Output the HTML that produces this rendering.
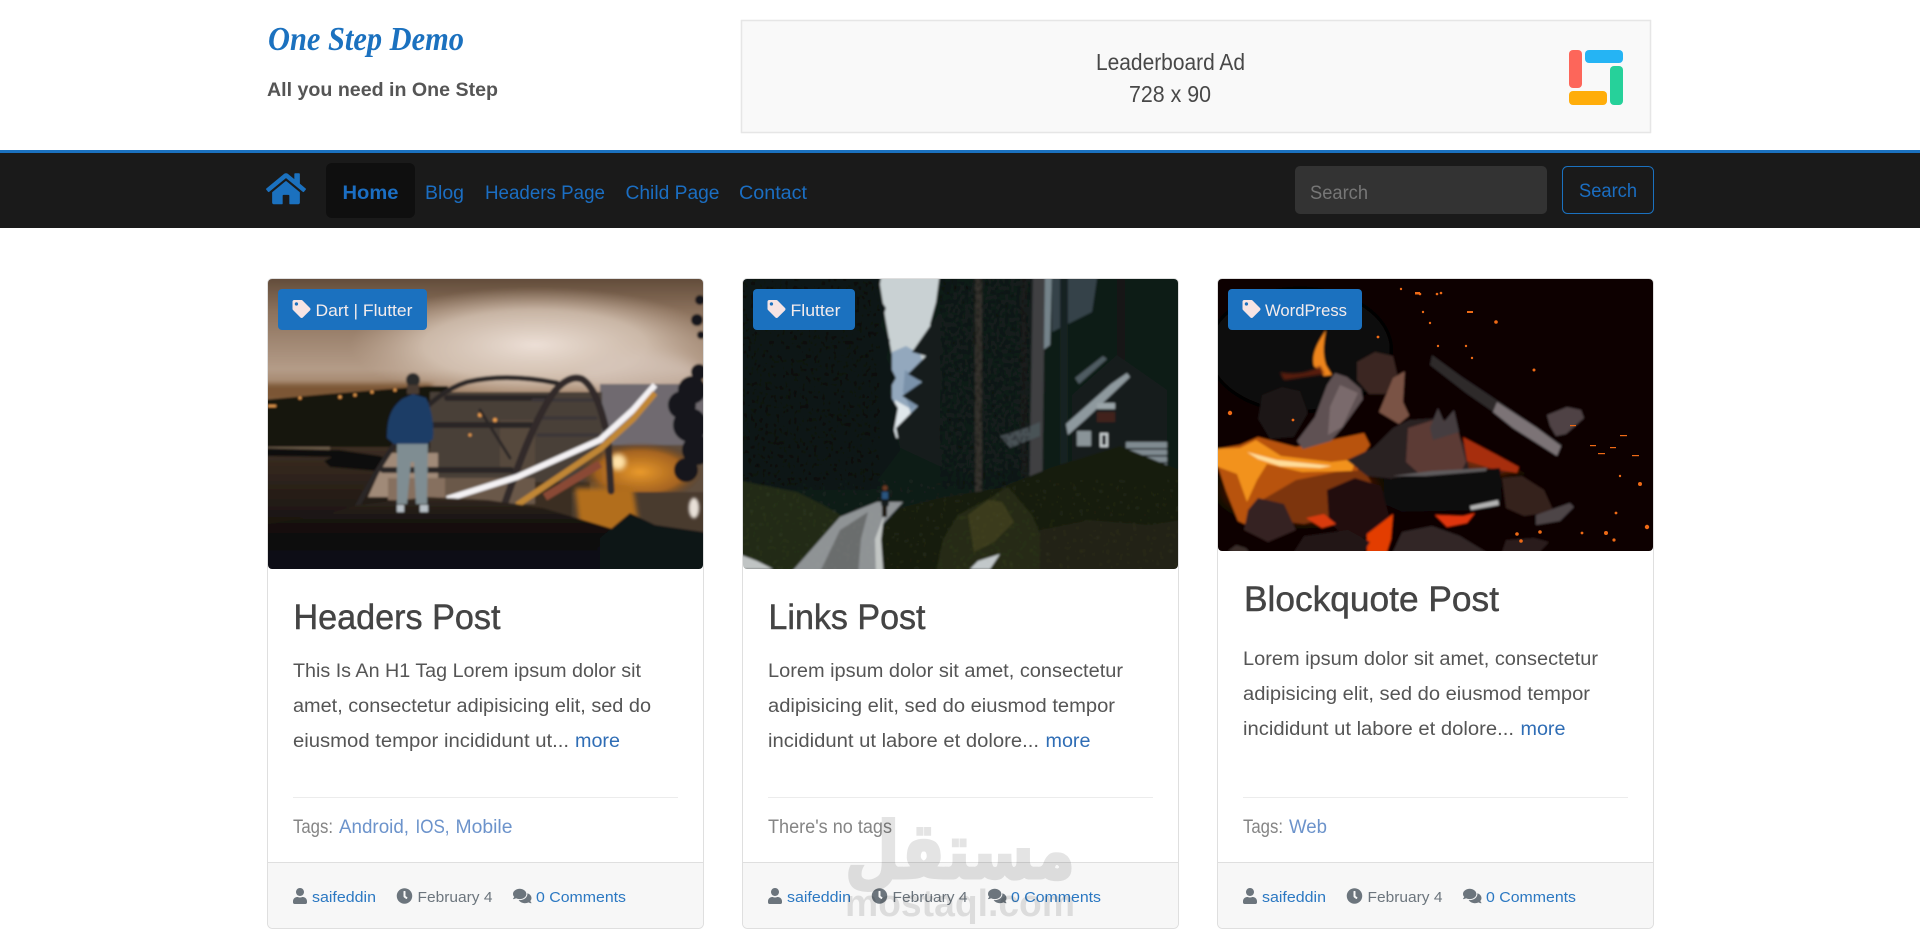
<!DOCTYPE html>
<html lang="en">
<head>
<meta charset="utf-8">
<title>One Step Demo</title>
<style>
html,body{margin:0;padding:0;background:#fff;width:1920px;height:943px;overflow:hidden}
svg{display:block}
text{font-family:"Liberation Sans",sans-serif}
.nav{font-size:19px;fill:#1b6ec2}
.p{font-size:19px;fill:#555}
.h{font-size:35px;fill:#444;stroke:#444;stroke-width:.45}
.t{font-size:19px;fill:#858585}
.tl{font-size:19px;fill:#6c93cb}
.m{font-size:19px;fill:#2f6db5}
.f{font-size:15px;fill:#6c757d}
.fl{font-size:15px;fill:#2b78c2}
.b{font-size:17px;fill:#f4ecec}
</style>
</head>
<body>
<svg width="1920" height="943" viewBox="0 0 1920 943" xmlns="http://www.w3.org/2000/svg">
<defs>
<symbol id="tag" viewBox="0 0 512 512"><path d="M0 252.118V48C0 21.49 21.49 0 48 0h204.118a48 48 0 0 1 33.941 14.059l211.882 211.882c18.745 18.745 18.745 49.137 0 67.882L293.823 497.941c-18.745 18.745-49.137 18.745-67.882 0L14.059 286.059A48 48 0 0 1 0 252.118zM112 64c-26.51 0-48 21.49-48 48s21.49 48 48 48 48-21.49 48-48-21.49-48-48-48z"/></symbol>
<symbol id="user" viewBox="0 0 448 512"><path d="M224 256c70.7 0 128-57.3 128-128S294.7 0 224 0 96 57.3 96 128s57.3 128 128 128zm89.6 32h-16.7c-22.2 10.2-46.9 16-72.9 16s-50.6-5.8-72.9-16h-16.7C60.2 288 0 348.2 0 422.4V464c0 26.5 21.5 48 48 48h352c26.5 0 48-21.5 48-48v-41.6c0-74.2-60.2-134.4-134.4-134.4z"/></symbol>
<symbol id="clock" viewBox="0 0 512 512"><path d="M256,8C119,8,8,119,8,256S119,504,256,504,504,393,504,256,393,8,256,8Zm92.49,313h0l-20,25a16,16,0,0,1-22.49,2.5h0l-67-49.72a40,40,0,0,1-15-31.23V112a16,16,0,0,1,16-16h32a16,16,0,0,1,16,16V256l58,42.5A16,16,0,0,1,348.49,321Z"/></symbol>
<symbol id="comments" viewBox="0 0 576 512"><path d="M416 192c0-88.4-93.1-160-208-160S0 103.6 0 192c0 34.3 14.1 65.9 38 92-13.4 30.2-35.5 54.2-35.8 54.5-2.2 2.3-2.8 5.7-1.5 8.7S4.8 352 8 352c36.6 0 66.9-12.3 88.7-25 32.2 15.7 70.3 25 111.3 25 114.9 0 208-71.6 208-160zm122 220c23.9-26 38-57.7 38-92 0-66.9-53.5-124.2-129.3-148.1.9 6.6 1.3 13.3 1.3 20.1 0 105.9-107.7 192-240 192-10.8 0-21.3-.8-31.7-1.9C207.8 439.6 281.8 480 368 480c41 0 79.1-9.2 111.3-25 21.8 12.7 52.1 25 88.7 25 3.2 0 6.1-1.9 7.3-4.8 1.3-2.9.7-6.3-1.5-8.7-.3-.3-22.4-24.2-35.8-54.5z"/></symbol>
<symbol id="home" viewBox="0 0 576 512"><path d="M488 312.7V456c0 13.3-10.7 24-24 24H348c-6.6 0-12-5.4-12-12V356c0-6.6-5.4-12-12-12h-72c-6.6 0-12 5.4-12 12v112c0 6.6-5.4 12-12 12H112c-13.3 0-24-10.7-24-24V312.7c0-3.6 1.6-7 4.4-9.3l188-154.8c4.4-3.6 10.8-3.6 15.3 0l188 154.8c2.7 2.3 4.3 5.7 4.3 9.3zm83.6-60.9L488 182.9V44.4c0-6.6-5.4-12-12-12h-56c-6.6 0-12 5.4-12 12V117l-89.5-73.7c-17.7-14.6-43.3-14.6-61 0L4.4 251.8c-5.1 4.2-5.8 11.8-1.6 16.9l25.5 31c4.2 5.1 11.8 5.8 16.9 1.6l235.2-193.7c4.4-3.6 10.8-3.6 15.3 0l235.2 193.7c5.1 4.2 12.7 3.5 16.9-1.6l25.5-31c4.2-5.2 3.4-12.7-1.7-16.9z"/></symbol>
<clipPath id="c1"><rect x="268" y="279" width="435" height="290" rx="4"/></clipPath>
<clipPath id="c2"><rect x="743" y="279" width="435" height="290" rx="4"/></clipPath>
<clipPath id="c3"><rect x="1218" y="279" width="435" height="272" rx="4"/></clipPath>
<filter id="soft" x="-5%" y="-5%" width="110%" height="110%"><feGaussianBlur stdDeviation="1.1"/></filter>
<filter id="bl1" x="-20%" y="-20%" width="140%" height="140%"><feGaussianBlur stdDeviation="1"/></filter>
<filter id="bl2" x="-20%" y="-20%" width="140%" height="140%"><feGaussianBlur stdDeviation="2.5"/></filter>
<filter id="bl5" x="-30%" y="-30%" width="160%" height="160%"><feGaussianBlur stdDeviation="6"/></filter>
<filter id="grain" x="0" y="0" width="100%" height="100%"><feTurbulence type="fractalNoise" baseFrequency=".35 .22" numOctaves="2" seed="4"/><feColorMatrix values="0 0 0 0 0  0 0 0 0 0  0 0 0 0 0  0 0 0 3.2 -1.5"/></filter>
<filter id="grainL" x="0" y="0" width="100%" height="100%"><feTurbulence type="fractalNoise" baseFrequency=".3" numOctaves="2" seed="9"/><feColorMatrix values="0 0 0 0 .42  0 0 0 0 .46  0 0 0 0 .38  0 0 0 3 -1.75"/></filter>
<linearGradient id="sky1" x1="0" y1="0" x2="0" y2="1"><stop offset="0" stop-color="#5a4534"/><stop offset=".3" stop-color="#8b715c"/><stop offset=".75" stop-color="#b49c88"/><stop offset="1" stop-color="#8f6a4a"/></linearGradient>
<radialGradient id="glow1"><stop offset="0" stop-color="#ecdfd6"/><stop offset=".6" stop-color="#dbcabb" stop-opacity=".75"/><stop offset="1" stop-color="#cbb5a2" stop-opacity="0"/></radialGradient>
<linearGradient id="wat1" x1="0" y1="0" x2="0" y2="1"><stop offset="0" stop-color="#3c2e23"/><stop offset="1" stop-color="#16110e"/></linearGradient>
<linearGradient id="fg1" x1="0" y1="0" x2="0" y2="1"><stop offset="0" stop-color="#33281f"/><stop offset=".35" stop-color="#14110f"/><stop offset="1" stop-color="#071014"/></linearGradient>
<radialGradient id="fireglow"><stop offset="0" stop-color="#e99a2c"/><stop offset=".7" stop-color="#b86a18" stop-opacity=".8"/><stop offset="1" stop-color="#6a3a10" stop-opacity="0"/></radialGradient>
<radialGradient id="fl3"><stop offset="0" stop-color="#c95a0c"/><stop offset=".7" stop-color="#7e2c08" stop-opacity=".85"/><stop offset="1" stop-color="#3a1004" stop-opacity="0"/></radialGradient>
</defs>

<rect width="1920" height="943" fill="#fff"/>

<!-- Header -->
<text x="268" y="50" font-size="34" font-style="italic" font-weight="700" fill="#1b71bf" textLength="196" lengthAdjust="spacingAndGlyphs" style="font-family:'Liberation Serif',serif">One Step Demo</text>
<text x="267" y="96" font-size="19" font-weight="700" fill="#555" textLength="231" lengthAdjust="spacingAndGlyphs">All you need in One Step</text>

<rect x="741.5" y="20.5" width="909" height="112" fill="#f9f9f9" stroke="#e6e6e6" stroke-width="1.5"/>
<text x="1096" y="70" font-size="23" fill="#484848" textLength="149" lengthAdjust="spacingAndGlyphs">Leaderboard Ad</text>
<text x="1129" y="102" font-size="23" fill="#484848" textLength="82" lengthAdjust="spacingAndGlyphs">728 x 90</text>
<rect x="1569" y="50" width="13" height="38" rx="4" fill="#fd665a"/>
<rect x="1585" y="50" width="38" height="13" rx="4" fill="#25b4f4"/>
<rect x="1610" y="66" width="13" height="39" rx="4" fill="#26d19a"/>
<rect x="1569" y="91" width="38" height="14" rx="4" fill="#ffad0a"/>

<!-- Nav -->
<rect x="0" y="150" width="1920" height="3" fill="#1b71bf"/>
<rect x="0" y="153" width="1920" height="75" fill="#1a1a1a"/>
<use href="#home" x="266" y="171" width="40" height="35.5" fill="#1b71bf"/>
<rect x="326" y="163" width="89" height="55" rx="6" fill="#0f0f0f"/>
<text x="342.5" y="199" class="nav" font-weight="700" textLength="56" lengthAdjust="spacingAndGlyphs">Home</text>
<text x="425" y="199" class="nav" textLength="39" lengthAdjust="spacingAndGlyphs">Blog</text>
<text x="485" y="199" class="nav" textLength="120" lengthAdjust="spacingAndGlyphs">Headers Page</text>
<text x="625.5" y="199" class="nav" textLength="94" lengthAdjust="spacingAndGlyphs">Child Page</text>
<text x="739" y="199" class="nav" textLength="68" lengthAdjust="spacingAndGlyphs">Contact</text>
<rect x="1295" y="166" width="252" height="48" rx="5" fill="#333"/>
<text x="1310" y="199" font-size="19" fill="#777" textLength="58" lengthAdjust="spacingAndGlyphs">Search</text>
<rect x="1562.5" y="166.5" width="91" height="47" rx="5" fill="none" stroke="#1b71bf"/>
<text x="1579" y="197" class="nav" textLength="58" lengthAdjust="spacingAndGlyphs">Search</text>

<!-- Card 1 -->
<rect x="267.5" y="278.5" width="436" height="650" rx="5" fill="#fff" stroke="#dfdfdf"/>
<path d="M268 863h435v60a5 5 0 0 1-5 5H273a5 5 0 0 1-5-5z" fill="#f7f7f7"/>
<rect x="268" y="862" width="435" height="1" fill="#dfdfdf"/>
<g clip-path="url(#c1)">
 <g filter="url(#soft)">
  <rect x="260" y="395" width="450" height="182" fill="#3a2e24"/>
  <rect x="260" y="272" width="450" height="130" fill="url(#sky1)"/>
  <ellipse cx="535" cy="345" rx="185" ry="58" fill="url(#glow1)"/>
  <ellipse cx="640" cy="375" rx="60" ry="22" fill="#d8c8be" opacity=".6" filter="url(#bl5)"/>
  <rect x="262" y="384" width="170" height="16" fill="#7b5635" filter="url(#bl2)"/>
  <!-- distant hills right -->
  <rect x="600" y="384" width="110" height="66" fill="#6f6a70"/>
  <rect x="590" y="445" width="120" height="60" fill="#5e4d3c"/>
  <!-- land left -->
  <path d="M262 400l66-6 100-8 20 0v62H262z" fill="#17130d"/>
  <rect x="262" y="447" width="130" height="85" fill="url(#wat1)"/>
  <rect x="262" y="447" width="68" height="8" fill="#6f5e4b"/>
  <path d="M262 456l70 1-8 4 6 6 60 5 10-8-20-8-40-6-78-2z" fill="#110f0b"/>
  <!-- under bridge -->
  <rect x="430" y="392" width="172" height="90" fill="#4a4037"/>
  <path d="M368 497l20-44h50v44z" fill="#a08a78"/>
  <path d="M388 478h60v22h-60z" fill="#86705f"/>
  <path d="M445 478h90v26h-90z" fill="#6a5949"/>
  <path d="M500 420h35v50h-35z" fill="#57493c"/>
  <ellipse cx="640" cy="472" rx="62" ry="30" fill="url(#fireglow)"/>
  <rect x="572" y="492" width="138" height="48" fill="#4a3b2f"/>
  <path d="M575 488h58l8 52h-60z" fill="#b26e1e" filter="url(#bl2)"/>
  <circle cx="618" cy="462" r="8" fill="#ffe2a8" filter="url(#bl2)"/>
  <ellipse cx="694" cy="508" rx="5" ry="10" fill="#e8e0d8" filter="url(#bl1)"/>
  <g fill="#f0a050"><circle cx="300" cy="398" r="1.5"/><circle cx="340" cy="397" r="1.6"/><circle cx="355" cy="395" r="1.5"/><circle cx="372" cy="392" r="1.5"/><circle cx="395" cy="390" r="1.5"/><rect x="268" y="405" width="8" height="2"/><circle cx="480" cy="415" r="2"/><circle cx="495" cy="420" r="2"/><circle cx="470" cy="435" r="1.5"/></g>
  <!-- bridge -->
  <g fill="none" stroke="#2a2527" stroke-linecap="round">
    <path d="M357 507C390 445 425 395 467 382c30-7 60-5 90 1" stroke-width="5"/>
    <path d="M447 398h100M433 425h98M383 470h128" stroke-width="6"/>
    <path d="M533 400h62M536 418h60M538 435h60" stroke-width="3" stroke="#3a3638"/>
    <path d="M505 503C520 460 535 420 552 395c8-12 20-20 30-16 14 8 22 40 26 60l3 52" stroke-width="7" stroke="#302a2c"/>
    <path d="M480 410l30 48" stroke-width="3"/>
  </g>
  <path d="M447 499l70-22 83-37 33-30 22-25" fill="none" stroke="#f4f2f4" stroke-width="6"/>
  <path d="M517 505l83-56 33-30 22-26" fill="none" stroke="#c08636" stroke-width="6"/>
  <path d="M545 497l55-33" fill="none" stroke="#8a4a34" stroke-width="8"/>
  <!-- foreground -->
  <path d="M262 525l66-11 30-9 70-8 60 3 55 8 60 18 40 12 60-4v40H262z" fill="url(#fg1)"/>
  <path d="M600 538l30-25 25 12 55 8v40H600z" fill="#0c1314"/>
  <!-- man -->
  <path d="M397 441h31l-1 63h-11l-2-42h-3l-4 42h-10z" fill="#7f8d92"/>
  <path d="M387 438c0-20 4-30 15-39l11-5 13 4c6 12 8 26 7 41l-6 5h-33z" fill="#1b3c66"/>
  <circle cx="413" cy="380" r="7" fill="#2a2a2a"/><rect x="407" y="385" width="12" height="9" fill="#4a3a30"/>
  <rect x="397" y="505" width="7" height="7" fill="#b8c0c6"/><rect x="420" y="505" width="8" height="7" fill="#b8c0c6"/>
  <!-- trees -->
  <g fill="#12171a">
    <circle cx="692" cy="390" r="14"/><circle cx="699" cy="372" r="8"/><circle cx="682" cy="405" r="14"/><circle cx="690" cy="425" r="17"/><circle cx="697" cy="450" r="15"/><circle cx="686" cy="470" r="12"/><circle cx="700" cy="300" r="5"/><circle cx="697" cy="320" r="6"/><circle cx="701" cy="335" r="4"/>
  </g>
 </g>
</g>
<rect x="278" y="289" width="149" height="41" rx="4" fill="#1b71bf"/>
<use href="#tag" x="292" y="300" width="19" height="18" fill="#f6e4e4"/>
<text x="315.5" y="316" class="b" textLength="97" lengthAdjust="spacingAndGlyphs">Dart | Flutter</text>
<text x="293.5" y="629" class="h" textLength="207" lengthAdjust="spacingAndGlyphs">Headers Post</text>
<text x="293" y="677" class="p" textLength="348" lengthAdjust="spacingAndGlyphs">This Is An H1 Tag Lorem ipsum dolor sit</text>
<text x="293" y="712" class="p" textLength="358" lengthAdjust="spacingAndGlyphs">amet, consectetur adipisicing elit, sed do</text>
<text x="293" y="747" class="p" textLength="276" lengthAdjust="spacingAndGlyphs">eiusmod tempor incididunt ut...</text>
<text x="575" y="747" class="m" textLength="45" lengthAdjust="spacingAndGlyphs">more</text>
<rect x="293" y="797" width="385" height="1" fill="#ececec"/>
<text x="293" y="833" class="t" textLength="40" lengthAdjust="spacingAndGlyphs">Tags:</text>
<text x="339" y="833" class="tl" textLength="70" lengthAdjust="spacingAndGlyphs">Android,</text>
<text x="415.5" y="833" class="tl" textLength="34" lengthAdjust="spacingAndGlyphs">IOS,</text>
<text x="455.5" y="833" class="tl" textLength="57" lengthAdjust="spacingAndGlyphs">Mobile</text>
<use href="#user" x="292.5" y="888" width="15" height="16" fill="#6c757d"/>
<text x="312" y="902" class="fl" textLength="64" lengthAdjust="spacingAndGlyphs">saifeddin</text>
<use href="#clock" x="396.5" y="888" width="16" height="16" fill="#6c757d"/>
<text x="417.5" y="902" class="f" textLength="75" lengthAdjust="spacingAndGlyphs">February 4</text>
<use href="#comments" x="513" y="887.5" width="18.5" height="17" fill="#6c757d"/>
<text x="536" y="902" class="fl" textLength="90" lengthAdjust="spacingAndGlyphs">0 Comments</text>

<!-- Card 2 -->
<rect x="742.5" y="278.5" width="436" height="650" rx="5" fill="#fff" stroke="#dfdfdf"/>
<path d="M743 863h435v60a5 5 0 0 1-5 5H748a5 5 0 0 1-5-5z" fill="#f7f7f7"/>
<rect x="743" y="862" width="435" height="1" fill="#dfdfdf"/>
<g clip-path="url(#c2)">
 <g filter="url(#soft)">
  <rect x="736" y="272" width="450" height="304" fill="#101a17"/>
  <!-- sky and mountain -->
  <path d="M878 272h62l-4 30-6 22 8 30-10 12-34 0-8-44z" fill="#c9d1d3"/>
  <path d="M1034 272h18l-2 75-14 8z" fill="#74838a"/>
  <path d="M1052 272h46l-6 40-40 20z" fill="#35434a"/>
  <path d="M892 352l14-6 14 8 14 42-12 34-14 8h-16z" fill="#93a8bd"/>
  <path d="M895 400l14 8 6 20-8 10h-13z" fill="#dfe6ea"/>
  <path d="M905 370l14 10 8 18-16 12-8-18z" fill="#7a92aa"/>
  <!-- tree masses -->
  <path d="M736 272h146l-4 24 8 12-6 18 10 14-4 18 10 20-8 14 10 16-4 22 6 20-30 40H736z" fill="#0d1715"/>
  <path d="M948 300l-36 52 14 4-18 18 14 8-20 14 16 10-22 22 4 20 60 28 80-10V272h-72z" fill="#121d1a"/>
  <path d="M1030 360l20-15 40 22 88-20v130h-150z" fill="#111a18"/>
  <path d="M1098 272h80v70l-44 18-30-5-12-25z" fill="#101a18"/>
  <!-- trunks -->
  <rect x="975" y="272" width="7" height="235" fill="#34332d"/>
  <path d="M1033 272h12l-3 232h-13z" fill="#3f4042"/>
  <rect x="1021" y="272" width="6" height="205" fill="#1a1d1c"/>
  <rect x="1060" y="272" width="8" height="205" fill="#182020"/>
  <rect x="1117" y="272" width="8" height="205" fill="#121816"/>
  <!-- house -->
  <path d="M1072 395l45-40 50 35v85h-95z" fill="#141b1d"/>
  <path d="M1066 424l45-40 16-11 3 4-44 42-18 16z" fill="#8e999e"/>
  <path d="M1075 378l28-22 4 3-28 25z" fill="#4f5c62"/>
  <path d="M1000 436l26-8 14-6v14l-30 12z" fill="#4a5257"/>
  <rect x="1097" y="403" width="18" height="6" fill="#9aa4a8"/>
  <rect x="1097" y="412" width="18" height="10" fill="#43201e"/>
  <rect x="1077" y="431" width="14" height="15" fill="#8a9498"/><rect x="1100" y="433" width="8" height="14" fill="#ced4d6"/><rect x="1102" y="435" width="4" height="10" fill="#1a2226"/>
  <rect x="1100" y="467" width="8" height="9" fill="#b8c0c4"/>
  <rect x="1126" y="442" width="41" height="30" fill="#808b91"/>
  <g fill="#1a2226"><rect x="1126" y="448" width="41" height="1.6"/><rect x="1126" y="455" width="41" height="1.6"/><rect x="1126" y="462" width="41" height="1.6"/><rect x="1126" y="468" width="41" height="1.6"/></g>
  <rect x="736" y="279" width="144" height="210" filter="url(#grain)" opacity=".5"/>
  <rect x="940" y="279" width="90" height="210" filter="url(#grain)" opacity=".5"/>
  <!-- ground -->
  <path d="M736 480l61 12 28 14 17 10-52 60h-54z" fill="#222b15"/>
  <path d="M884 576l-4-46 20-22 40-10 60-10 50-20 70-22 64 26v104z" fill="#181d0e"/>
  <path d="M935 576l8-36 15-25 30-16 20-12 24 28 12 28 10 33z" fill="#252c12"/>
  <path d="M968 515l20-15 14 2 12 20-20 20-20 10z" fill="#3a3a1a"/>
  <path d="M1040 530l50-10 60 5 30-5v56h-140z" fill="#222212"/>
  <path d="M903 502h-26l-37 15-52 59h96l-4-49z" fill="#8f9395"/>
  <path d="M868 512l-28 18-22 46h40l3-37z" fill="#6a6d6d"/>
  <path d="M884 515l-3 25 2 36h-7l-1-37z" fill="#c2c6c4"/>
  <path d="M736 553l21 8 16 8h-37z" fill="#c0c4c4"/>
  <path d="M970 569l8-8 22-7-10 15z" fill="#c2c8ca"/>
  <rect x="736" y="480" width="450" height="96" filter="url(#grainL)" opacity=".15"/>
  <rect x="881" y="490" width="8" height="17" rx="3" fill="#161a1e"/><rect x="882" y="492" width="6" height="7" fill="#2a5580"/><rect x="882" y="506" width="5" height="11" fill="#1a1410"/><circle cx="885" cy="488" r="2.5" fill="#6d3a24"/>
 </g>
</g>
<rect x="753" y="289" width="102" height="41" rx="4" fill="#1b71bf"/>
<use href="#tag" x="767" y="300" width="19" height="18" fill="#f6e4e4"/>
<text x="790.5" y="316" class="b" textLength="50" lengthAdjust="spacingAndGlyphs">Flutter</text>
<text x="768.5" y="629" class="h" textLength="157" lengthAdjust="spacingAndGlyphs">Links Post</text>
<text x="768" y="677" class="p" textLength="355" lengthAdjust="spacingAndGlyphs">Lorem ipsum dolor sit amet, consectetur</text>
<text x="768" y="712" class="p" textLength="347" lengthAdjust="spacingAndGlyphs">adipisicing elit, sed do eiusmod tempor</text>
<text x="768" y="747" class="p" textLength="271" lengthAdjust="spacingAndGlyphs">incididunt ut labore et dolore...</text>
<text x="1045.5" y="747" class="m" textLength="45" lengthAdjust="spacingAndGlyphs">more</text>
<rect x="768" y="797" width="385" height="1" fill="#ececec"/>
<text x="768" y="833" class="t" textLength="124" lengthAdjust="spacingAndGlyphs">There's no tags</text>
<use href="#user" x="767.5" y="888" width="15" height="16" fill="#6c757d"/>
<text x="787" y="902" class="fl" textLength="64" lengthAdjust="spacingAndGlyphs">saifeddin</text>
<use href="#clock" x="871.5" y="888" width="16" height="16" fill="#6c757d"/>
<text x="892.5" y="902" class="f" textLength="75" lengthAdjust="spacingAndGlyphs">February 4</text>
<use href="#comments" x="988" y="887.5" width="18.5" height="17" fill="#6c757d"/>
<text x="1011" y="902" class="fl" textLength="90" lengthAdjust="spacingAndGlyphs">0 Comments</text>

<!-- Card 3 -->
<rect x="1217.5" y="278.5" width="436" height="650" rx="5" fill="#fff" stroke="#dfdfdf"/>
<path d="M1218 863h435v60a5 5 0 0 1-5 5H1223a5 5 0 0 1-5-5z" fill="#f7f7f7"/>
<rect x="1218" y="862" width="435" height="1" fill="#dfdfdf"/>
<g clip-path="url(#c3)">
 <g filter="url(#soft)">
  <rect x="1210" y="272" width="450" height="286" fill="#090505"/>
  <ellipse cx="1300" cy="350" rx="90" ry="60" fill="#0e0908" filter="url(#bl5)"/>
  <ellipse cx="1300" cy="490" rx="90" ry="40" fill="url(#fl3)"/>
  <ellipse cx="1485" cy="455" rx="60" ry="28" fill="url(#fl3)" opacity=".7"/>
  <!-- small top flame -->
  <path d="M1326 330c-8 12-15 24-12 36l10 10 8-1-6-10c-4-12-2-24 0-35z" fill="#ee851c"/>
  <path d="M1280 372c14 4 32 0 40-6l4 8-40 6z" fill="#5a1e08" filter="url(#bl1)"/>
  <!-- big flame -->
  <path d="M1210 450l30-5 18-8 38 10 30-6 38-8 6 12-14 20 8 16-26 12-40 26-34 14-26-12-12-30-10-30z" fill="#b8520b"/>
  <path d="M1210 449l30-1 16-8 25 16 50 6 25-3-4 12-50 1-35-8-10 16-10 22-10-28-27-10z" fill="#f2921f"/>
  <path d="M1247 452l30 8 55 6 18-3-30 5-40-2-22-7z" fill="#ffdd9a"/>
  <path d="M1262 500l34-20 40-8 28-2 8 14-28 30-40 10-30-4z" fill="#7d3510"/>
  <!-- rocks behind -->
  <path d="M1262 395l20-8 18 4 8 22-14 24-24 2-12-20z" fill="#1a1312"/>
  <path d="M1357 362l18-10 18 4 6 26-14 12-16 0-12-14z" fill="#3a2624"/>
  <path d="M1407 370l-14 8-14 34 20 12 12-10z" fill="#7a5244"/>
  <!-- grey log -->
  <path d="M1335 373l-8 12-12 32-18 24 6 8 28-8 12-14 20-28-2-10-14-12z" fill="#5f5152"/>
  <path d="M1340 385l18 8-16 34-14 8 2-28z" fill="#7a6b6c"/>
  <!-- black log -->
  <path d="M1420 352l-15 14-2 36 12 26 36 12 40 16 48 24 14-18 8-20-50-36-50-34z" fill="#070406"/>
  <path d="M1432 355l30 22 30 20 70 48-4 8-66-42-26-18-36-28z" fill="#2f2a2c"/>
  <path d="M1497 402l40 26 24 18-4 10-44-28-20-16z" fill="#7c7376"/>
  <path d="M1547 415l20-8 14 3 3 8-18 16-10 2-6-10z" fill="#4f4345"/>
  <!-- centre rocks -->
  <path d="M1347 460l26-12 20-20 16-8 30-2 10 4 16 24 4 24-26 8-40 2-36-4z" fill="#2a2022"/>
  <path d="M1408 428l32-10 18 12 8 32-6 12-36 4-18-16z" fill="#5c3a36"/>
  <path d="M1430 428l8-20 6 14 10-12 5 22-26 8z" fill="#453c3f"/>
  <path d="M1463 437l34 18 22 12-2 6-24-4-26-8z" fill="#a72d08"/>
  <!-- lower log -->
  <path d="M1384 480l30-6 50-3 36-3 2 32-12 10-88 2-18-8z" fill="#0a0708"/>
  <path d="M1392 476l40-5 55-3-1 3-60 5z" fill="#5e5b5d"/>
  <path d="M1470 506l28-6 1 5-28 5z" fill="#b4b4b4"/>
  <!-- right rocks -->
  <path d="M1502 478l20-2 22 14 10 22-30 4-18-8z" fill="#34211e"/>
  <path d="M1536 515l34-12 4 4-14 14-24 4z" fill="#4d4547"/>
  <!-- lower rocks -->
  <path d="M1327 490l28-12 26 8 8 30-6 18-34 6-20-18z" fill="#200e0c"/>
  <path d="M1258 498l26 6 12 26-28 12-24-12 4-20z" fill="#352320"/>
  <path d="M1306 518l18-4 12 10-14 4z" fill="#d93a08"/>
  <path d="M1435 515l28 1 12-3-8 10-20 4z" fill="#e03608"/>
  <path d="M1367 534l26-20-2 25-6 19h-18z" fill="#e33e06"/>
  <path d="M1390 558l12-26 30-6 28 10 36 22z" fill="#332828"/>
  <path d="M1290 558l14-22 44-6 22 12-10 16z" fill="#241716"/>
  <path d="M1500 558l6-18 28-2 15 4-15 16z" fill="#2a1c1a"/>
  <path d="M1228 551l8-6 10 3 6 8z" fill="#3a2f2c"/>
 </g>
 <g fill="#ee6a16">
    <circle cx="1420" cy="294" r="1.3"/><circle cx="1401" cy="289" r="1.2"/><circle cx="1437" cy="294" r="1.3"/><rect x="1415" y="292" width="5" height="2.5"/><circle cx="1441" cy="293" r="1.3"/><rect x="1467" y="311" width="6" height="2"/><circle cx="1496" cy="322" r="1.8"/><circle cx="1423" cy="312" r="1.2"/><circle cx="1430" cy="323" r="1.2"/><circle cx="1378" cy="337" r="1.4"/><circle cx="1438" cy="346" r="1.2"/><circle cx="1466" cy="346" r="1.2"/><circle cx="1472" cy="358" r="1.2"/><circle cx="1534" cy="370" r="1.5"/><circle cx="1230" cy="413" r="2.2"/><circle cx="1293" cy="420" r="1.4"/><circle cx="1640" cy="484" r="2"/><circle cx="1620" cy="476" r="1.2"/><circle cx="1647" cy="527" r="2.2"/><circle cx="1606" cy="533" r="2"/><circle cx="1614" cy="540" r="1.6"/><circle cx="1582" cy="533" r="1.4"/><circle cx="1540" cy="532" r="1.8"/><circle cx="1517" cy="534" r="1.8"/><circle cx="1521" cy="541" r="1.8"/><circle cx="1616" cy="513" r="1.4"/>
    <rect x="1598" y="453" width="7" height="1.2"/><rect x="1590" y="445" width="6" height="1.2"/><rect x="1632" y="455" width="7" height="1.2"/><rect x="1610" y="447" width="6" height="1.2"/><rect x="1620" y="435" width="7" height="1.2"/><rect x="1570" y="425" width="6" height="1.2"/>
 </g>
</g>
<rect x="1228" y="289" width="134" height="41" rx="4" fill="#1b71bf"/>
<use href="#tag" x="1242" y="300" width="19" height="18" fill="#f6e4e4"/>
<text x="1265" y="316" class="b" textLength="82" lengthAdjust="spacingAndGlyphs">WordPress</text>
<text x="1244" y="611" class="h" textLength="255" lengthAdjust="spacingAndGlyphs">Blockquote Post</text>
<text x="1243" y="665" class="p" textLength="355" lengthAdjust="spacingAndGlyphs">Lorem ipsum dolor sit amet, consectetur</text>
<text x="1243" y="700" class="p" textLength="347" lengthAdjust="spacingAndGlyphs">adipisicing elit, sed do eiusmod tempor</text>
<text x="1243" y="735" class="p" textLength="271" lengthAdjust="spacingAndGlyphs">incididunt ut labore et dolore...</text>
<text x="1520.5" y="735" class="m" textLength="45" lengthAdjust="spacingAndGlyphs">more</text>
<rect x="1243" y="797" width="385" height="1" fill="#ececec"/>
<text x="1243" y="833" class="t" textLength="40" lengthAdjust="spacingAndGlyphs">Tags:</text>
<text x="1289" y="833" class="tl" textLength="38" lengthAdjust="spacingAndGlyphs">Web</text>
<use href="#user" x="1242.5" y="888" width="15" height="16" fill="#6c757d"/>
<text x="1262" y="902" class="fl" textLength="64" lengthAdjust="spacingAndGlyphs">saifeddin</text>
<use href="#clock" x="1346.5" y="888" width="16" height="16" fill="#6c757d"/>
<text x="1367.5" y="902" class="f" textLength="75" lengthAdjust="spacingAndGlyphs">February 4</text>
<use href="#comments" x="1463" y="887.5" width="18.5" height="17" fill="#6c757d"/>
<text x="1486" y="902" class="fl" textLength="90" lengthAdjust="spacingAndGlyphs">0 Comments</text>

<!-- Watermark -->
<g opacity=".1">
  <text x="1075" y="878" font-size="78" font-weight="700" fill="#000" stroke="#000" stroke-width="3" textLength="230" lengthAdjust="spacingAndGlyphs" style="font-family:'DejaVu Sans',sans-serif" direction="rtl">مستقل</text>
  <text x="845" y="916" font-size="38" font-weight="700" fill="#000" textLength="230" lengthAdjust="spacingAndGlyphs">mostaql.com</text>
</g>
</svg>
</body>
</html>
